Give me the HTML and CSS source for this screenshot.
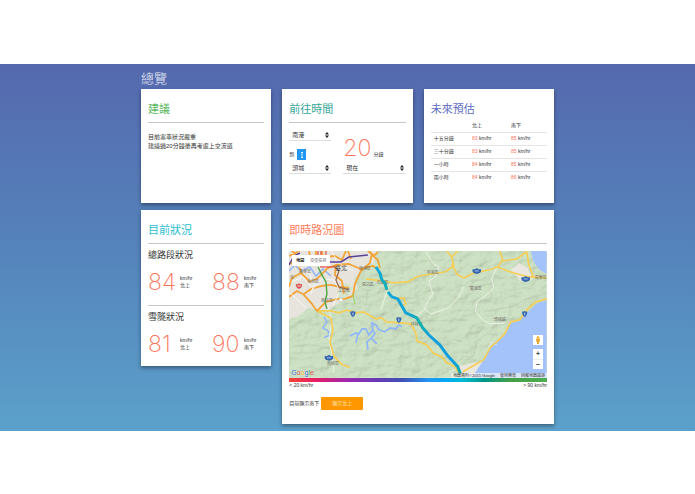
FILE: index.html
```html
<!DOCTYPE html>
<html lang="zh-Hant">
<head>
<meta charset="utf-8">
<meta name="viewport" content="width=device-width, initial-scale=1">
<title>總覽</title>
<link rel="stylesheet" href="styles.css">
</head>
<body>
<main class="overview">
  <div class="container">
    <h1 class="page-title">總覽</h1>
    <div class="cards">
      <section class="card">
        <h2 class="card-title green">建議</h2>
        <hr class="rule">
        <p class="advice">目前塞車狀況嚴重<br>建議過20分鐘後再考慮上交流道</p>
      </section>

      <section class="card">
        <h2 class="card-title teal">前往時間</h2>
        <hr class="rule">
        <form class="trip">
          <div class="trip-route">
            <div class="select-box">
              <select aria-label="起點"><option>南港</option></select>
              <svg class="caret" viewBox="0 0 4 6" aria-hidden="true"><path d="M2 0L4 2.5H0ZM2 6L0 3.5H4Z"/></svg>
            </div>
            <div class="swap">
              <span>到</span>
              <button type="button" class="swap-button" aria-label="交換"><svg viewBox="0 0 4 8" aria-hidden="true"><path d="M2 1V7M1 2L2 1L3 2M1 6L2 7L3 6"/></svg></button>
            </div>
            <div class="select-box">
              <select aria-label="終點"><option>頭城</option></select>
              <svg class="caret" viewBox="0 0 4 6" aria-hidden="true"><path d="M2 0L4 2.5H0ZM2 6L0 3.5H4Z"/></svg>
            </div>
          </div>
          <div class="trip-time">
            <p class="minutes"><span class="figure">20</span><span class="minutes-unit">分鐘</span></p>
            <div class="select-box">
              <select aria-label="出發時間"><option>現在</option></select>
              <svg class="caret" viewBox="0 0 4 6" aria-hidden="true"><path d="M2 0L4 2.5H0ZM2 6L0 3.5H4Z"/></svg>
            </div>
          </div>
        </form>
      </section>

      <section class="card">
        <h2 class="card-title indigo">未來預估</h2>
        <table class="forecast">
          <thead><tr><th></th><th>北上</th><th>南下</th></tr></thead>
          <tbody>
            <tr><th>十五分鐘</th><td><b>83</b> km/hr</td><td><b>85</b> km/hr</td></tr>
            <tr><th>三十分鐘</th><td><b>83</b> km/hr</td><td><b>85</b> km/hr</td></tr>
            <tr><th>一小時</th><td><b>84</b> km/hr</td><td><b>85</b> km/hr</td></tr>
            <tr><th>兩小時</th><td><b>84</b> km/hr</td><td><b>86</b> km/hr</td></tr>
          </tbody>
        </table>
      </section>

      <section class="card status">
        <h2 class="card-title cyan">目前狀況</h2>
        <hr class="rule">
        <h3 class="status-title">總路段狀況</h3>
        <div class="speeds">
          <div class="speed"><span class="figure">84</span><span class="unit">km/hr<br>北上</span></div>
          <div class="speed"><span class="figure">88</span><span class="unit">km/hr<br>南下</span></div>
        </div>
        <hr class="rule">
        <h3 class="status-title">雪隧狀況</h3>
        <div class="speeds">
          <div class="speed"><span class="figure">81</span><span class="unit">km/hr<br>北上</span></div>
          <div class="speed"><span class="figure">90</span><span class="unit">km/hr<br>南下</span></div>
        </div>
      </section>

      <section class="card map-card">
        <h2 class="card-title orange">即時路況圖</h2>
        <hr class="rule">
        <div class="map">
          <svg class="map-canvas" viewBox="0 0 258 127" role="img" aria-label="即時路況圖">
            <defs>
              <filter id="relief" x="0" y="0" width="100%" height="100%">
                <feTurbulence type="fractalNoise" baseFrequency="0.07 0.1" numOctaves="3" seed="8"/>
                <feColorMatrix values="0 0 0 0 0  0 0 0 0 0  0 0 0 0 0  1 0 0 0 0"/>
                <feDiffuseLighting surfaceScale="4" diffuseConstant="1.1" lighting-color="#d2e3c8"><feDistantLight azimuth="225" elevation="62"/></feDiffuseLighting>
              </filter>
              <linearGradient id="flow" x1="88" y1="17" x2="172" y2="122" gradientUnits="userSpaceOnUse">
                <stop offset="0" stop-color="#0ea5e0"/><stop offset=".16" stop-color="#12b0b4"/><stop offset=".24" stop-color="#12a5dc"/><stop offset=".42" stop-color="#12a5d0"/><stop offset=".52" stop-color="#10b3a8"/><stop offset=".64" stop-color="#119fdc"/><stop offset=".92" stop-color="#0e9fdc"/><stop offset="1" stop-color="#10ab9c"/>
              </linearGradient>
              <g id="shield"><path d="M-4-2Q-2-1 0-3Q2-1 4-2Q5 1 3 2L0 3L-3 2Q-5 1-4-2Z" fill="#3566ae"/><path d="M-2 0H2" stroke="#c9daf0" stroke-width=".8"/></g>
              <g id="badge"><path d="M-2.5-2.5Q-1-2 0-3Q1-2 2.5-2.5Q3 1 0 3Q-3 1-2.5-2.5Z" fill="#3566ae"/><path d="M0-1.3V1.3" stroke="#dbe6f5" stroke-width=".8"/></g>
            </defs>
            <rect width="258" height="127" fill="#cadfc1"/>
            <rect width="258" height="127" filter="url(#relief)" opacity=".28"/>
            <path d="M0 0H88L86 12L77 15L65 28L69 37L60 46L50 52L38 60L20 57L8 66L0 68Z" fill="#e6e4dc"/>
            <path d="M48 40L57 32L64 36L60 44L50 51Z" fill="#d4e3c9"/>
            <path d="M171 127L169 116L184 112L195 111L184 127ZM222 19L230 12L239 17L244 28L232 30Z" fill="#e9e7df"/>
            <path d="M242 0L245 11L251 19L258 23V0ZM258 49L249 52L239 61L231 69L221 73L217 81L209 89L202 95L196 106L193 112L187 121L183 127H258Z" fill="#a5c3fb"/>
            <g fill="none" stroke="#91b5fa">
              <path d="M61 85L67 82L70 83L73 78H77L80 84L84 79L86 83L83 87L78 91L79 99M69 83L67 92M83 88L88 93M84 80L83 72L87 74L90 79L96 81L101 77L107 78L110 74L113 76" stroke-width="1.7"/>
              <path d="M35 66L38 71L34 77L39 80L41 84L35 87M0 20L6 14L12 20L21 16L27 25L34 18L42 25" stroke-width="1.5"/>
            </g>
            <g fill="none" stroke="#f1f3ea" stroke-width=".9">
              <path d="M137 1L145 13L150 16L147 26L140 30L144 43L139 50L136 58L142 63M208 17L203 27L205 36L198 44L188 51L187 61L195 70L202 73L216 72M142 63L160 57L170 46L175 36M39 54L43 70L40 88L43 103L45 122"/>
              <path d="M98 41L95 50L92 58M136 58L128 65M208 94L203 91L200 96M171 117L160 121"/>
            </g>
            <g fill="none" stroke="#b3b8aa" stroke-width=".6" stroke-dasharray="2 1"><path d="M196 61L210 58L224 56L235 49L248 45L258 43M169 111L174 106L185 105L188 91L199 82L207 76L220 72M55 40L61 47L68 46L77 54L79 39L69 36"/></g>
            <g fill="none" stroke="#f4ce59" stroke-linejoin="round" stroke-width="1.7">
              <path d="M77 28L94 30L104 32L119 31L130 25L143 23L156 21L165 15L163 6L169 0M163 6L158 0M163 13L168 23L175 27L185 22L200 19L209 16L214 9L211 0M209 16L219 20L229 23L241 26L258 27M214 10L228 8L239 0M238 0L240 13L245 27"/>
              <path d="M28 60L42 60L50 62L58 59L66 62L75 61L87 68L93 67L97 71L113 72L122 73L127 82L128 90L138 94L144 102L153 106L158 112L166 116L171 123"/>
              <path d="M28 60L42 67L44 80L41 91L45 105L52 113L61 117M258 48L247 51L239 58L231 69L222 71L216 83L207 92L202 96L195 109L174 121M106 48L115 47L117 53L112 56"/>
            </g>
            <g fill="none" stroke="#f3a437" stroke-linejoin="round" stroke-width="1.8">
              <path d="M0 46L8 40L14 43L23 53L28 60L37 51L49 48L56 48L64 45L66 33L72 20L81 12L83 3L79 0"/>
              <path d="M0 12L9 13L13 23L21 31L29 27L34 22L39 17L47 14L60 13L72 18L84 15L89 18M12 22L3 27L0 36M15 43L22 38L33 35L42 34L50 36L60 37"/>
              <path d="M3 0L11 7L17 14L26 12L35 6L46 5L53 9L57 0M20 0L22 10M27 0V9M33 0L35 12M59 0L62 8M80 0L85 5L89 1M83 4L89 9L91 17M47 14L46 24L53 30L55 43M0 5L11 0"/>
            </g>
            <g fill="none" stroke="#fff" stroke-width=".7"><path d="M2 31L14 26L24 38L33 28L45 29L51 40L44 55M10 0L9 15L20 22L25 33L22 43M0 41L9 49L17 57M43 0L48 11L58 17L65 20"/></g>
            <path d="M29 0V5M37 0V7M32 0V16H46" fill="none" stroke="#e23c3c" stroke-width="1.1"/>
            <path d="M0 14L5 5L11 2M24 11H52L60 6L79 4" fill="none" stroke="#5b4299" stroke-width="1.5"/>
            <path d="M29 16L33 24L37 31L38 43L36 51L38 58" fill="none" stroke="#4ba642" stroke-width="1.4"/>
            <path d="M45 15L50 20L47 29L50 36L60 39" fill="none" stroke="#9c6c4d" stroke-width="1.3"/>
            <path d="M64 43L66 53" stroke="#99d05c"/>
            <g class="map-label">
              <text class="city" x="46" y="19">臺北</text><text x="1" y="28">市</text><text x="10" y="22">萬華區</text><text x="18" y="32">永和區</text><text x="32" y="51">新店區</text><text x="49" y="41">文山區</text><text x="70" y="19">南港區</text><text x="73" y="35">深坑區</text><text x="88" y="33">石碇區</text><text x="138" y="23">平溪區</text><text x="181" y="39">雙溪區</text><text x="246" y="28">貢寮區</text><text x="205" y="70">頭城鎮</text><text x="122" y="75">坪林區</text><text x="38" y="114">烏來區</text>
            </g>
            <g fill="none" stroke="url(#flow)" stroke-width="3" stroke-linejoin="round">
              <path d="M87 16L91 22L93 29L96 32L98 39"/><path d="M99 41L103 46L109 48L113 55L117 62L128 67L134 77L141 85L151 94L159 105L169 116L172 124"/>
            </g>
            <use href="#shield" x="188" y="20"/><use href="#shield" x="237" y="28"/><use href="#shield" x="40" y="107"/>
            <use href="#badge" x="64" y="63"/><use href="#badge" x="110" y="69"/><use href="#badge" x="236" y="63"/>
            <circle cx="52" cy="49" r="2" fill="#fff" stroke="#aaa" stroke-width=".5"/>
            <path d="M7 33Q9 34 10 32Q11 34 13 33Q14 36 10 38Q6 36 7 33Z" fill="#dc5151"/><path d="M8 35H12" stroke="#fff" stroke-width=".7"/>
          </svg>
          <div class="map-types"><button type="button" class="active">地圖</button><button type="button">衛星檢視</button></div>
          <div class="map-logo" aria-label="Google"><span class="g-blue">G</span><span class="g-red">o</span><span class="g-yellow">o</span><span class="g-blue">g</span><span class="g-green">l</span><span class="g-red">e</span></div>
          <div class="map-tools">
            <button type="button" class="pegman" aria-label="街景服務"><svg viewBox="0 0 6 8" aria-hidden="true"><circle cx="3" cy="1.6" r="1.5" fill="#f5b63d"/><path d="M1 3H5L4.6 5.8L4 6V8H2V6L1.4 5.8Z" fill="#e8a42e"/></svg></button>
            <div class="zoom"><button type="button" aria-label="放大">+</button><button type="button" aria-label="縮小">−</button></div>
          </div>
          <div class="map-credit"><span>地圖資料©2015 Google</span><a href="#">使用條款</a><a href="#">回報地圖錯誤</a></div>
        </div>
        <div class="scale-bar"></div>
        <div class="scale-labels"><span>&lt; 20 km/hr</span><span>&gt; 90 km/hr</span></div>
        <div class="direction"><span>目前顯示南下</span><button type="button" class="direction-button">顯示北上</button></div>
      </section>
    </div>
  </div>
</main>
</body>
</html>
```
FILE: styles.css
```css
* { box-sizing: border-box; }
body {
  margin: 0;
  padding: 64px 0;
  background: #fff;
  color: #333;
  font: 400 6px/9px "Liberation Sans", "Noto Sans CJK TC", sans-serif;
}
h1, h2, h3, p { margin: 0; font-weight: 400; }
button, select { font: inherit; color: inherit; border: 0; padding: 0; background: none; }
a { color: inherit; text-decoration: none; }

.overview {
  padding: 5px 16px 7px;
  background: linear-gradient(#5569ae, #5583bb 50%, #5ba1cb);
}
.container { max-width: 413px; margin: 0 auto; }
.page-title { color: #e4e8f4; font-size: 13px; line-height: 20px; font-weight: 300; }
.cards {
  display: grid;
  grid-template-columns: repeat(3, 1fr);
  gap: 7px 11px;
  align-items: start;
}
.card {
  min-height: 114px;
  padding: 12px 7px;
  background: #fff;
  box-shadow: 0 2px 4px rgba(0, 0, 0, .4);
}
.card-title { font-size: 11px; line-height: 16px; }
.green { color: #5cb860; }
.teal { color: #35a598; }
.indigo { color: #5f6dc2; }
.cyan { color: #2bbdd1; }
.orange { color: #ff7a57; }
.rule { height: 1px; margin: 5px 0 8px; border: 0; background: #c6c6c6; }
.advice { padding-top: 2px; }
.figure {
  color: #ff7358;
  font: 200 23px/24px Inter, Roboto, sans-serif;
}

.trip { display: grid; grid-template-columns: 42px 1fr; gap: 12px; }
.select-box { position: relative; border-bottom: 1px solid #ddd; }
.select-box select { display: block; width: 100%; height: 9px; padding-left: 3px; appearance: none; }
.caret { position: absolute; top: 1px; right: 2px; width: 4px; height: 6px; fill: #222; }
.swap { display: flex; align-items: center; gap: 3px; padding: 8px 0 4px; font-size: 5px; }
.swap-button { display: grid; place-items: center; width: 9px; height: 11px; background: #2196f3; }
.swap-button svg { width: 4px; height: 8px; fill: none; stroke: #fff; stroke-width: .8; }
.minutes { display: flex; align-items: baseline; gap: 2px; padding: 5px 0 4px; }
.minutes-unit { font-size: 5px; }

.forecast { width: 100%; margin-top: 2px; border-collapse: collapse; font-size: 5px; line-height: 7px; table-layout: fixed; }
.forecast th, .forecast td { height: 13px; padding: 0 3px; text-align: left; font-weight: 400; }
.forecast th:first-child { width: 33%; }
.forecast tbody tr { border-top: 1px solid #e4e4e4; }
.forecast b { color: #ff7358; font-weight: 400; }

.status { padding-bottom: 4px; }
.status .rule { margin-bottom: 5px; }
.status-title { font-size: 9px; line-height: 13px; }
.speeds { display: grid; grid-template-columns: 64px 1fr; padding: 8px 0 6px; }
.speed { display: grid; grid-template-columns: 32px auto; align-items: center; justify-content: start; }
.unit { font-size: 5px; line-height: 7px; }

.map-card { grid-column: span 2; padding-bottom: 14px; }
.map-card .rule { margin-bottom: 7px; }
.map { position: relative; overflow: hidden; }
.map-canvas { display: block; width: 100%; height: auto; }
.map-label { fill: #6d6762; font-size: 4px; font-weight: 400; }
.city { font-size: 6px; fill: #444; }
.map-types { position: absolute; top: 4px; left: 3px; display: flex; gap: 6px; padding: 0 4px; height: 11px; align-items: center; background: #fff; color: #777; font-size: 4px; line-height: 11px; }
.map-types .active { color: #111; font-weight: 700; }
.map-logo { position: absolute; left: 2px; bottom: 1px; font: 400 7px/8px "Liberation Sans", sans-serif; text-shadow: 0 0 1px #fff; }
.g-blue { color: #3469cf; }
.g-red { color: #dd4b40; }
.g-yellow { color: #f2b51d; }
.g-green { color: #269f55; }
.map-tools { position: absolute; right: 4px; bottom: 9px; display: grid; gap: 4px; width: 10px; }
.map-tools button { display: grid; place-items: center; width: 10px; height: 10px; background: #fff; font: 700 7px/10px "Open Sans", sans-serif; }
.pegman svg { width: 6px; height: 8px; }
.zoom button + button { border-top: 1px solid #eee; }
.map-credit { position: absolute; right: 0; bottom: 0; display: flex; gap: 5px; padding: 0 2px; background: rgba(240, 243, 243, .7); font-size: 4px; line-height: 5px; }
.scale-bar { height: 4px; background: linear-gradient(90deg, #f44336, #e91e63 10%, #9c27b0 23%, #673ab7 34%, #3f51b5 44%, #2196f3 54%, #03a9f4 61%, #00bcd4 67%, #009688 76%, #43a047 86%, #4caf50); }
.scale-labels { display: flex; justify-content: space-between; font-size: 5px; line-height: 7px; }
.direction { display: flex; align-items: center; gap: 2px; padding-top: 8px; font-size: 5px; }
.direction-button { width: 42px; height: 13px; border-radius: 1px; background: #ff9800; color: #ffe8bd; text-align: center; }
```
